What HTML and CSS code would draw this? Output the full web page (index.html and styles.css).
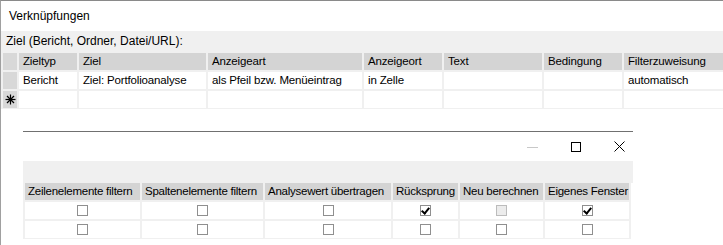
FILE: index.html
```html
<!DOCTYPE html>
<html lang="de">
<head>
    <meta charset="UTF-8">
    <title>Verknüpfungen</title>
    <link rel="stylesheet" href="styles.css">
</head>
<body>
    <div class="frame">
        <div class="title">Verknüpfungen</div>

        <div class="links">
            <div class="caption">Ziel (Bericht, Ordner, Datei/URL):</div>
            <div class="grid">
                <div class="rowhead"></div>
                <div class="head">Zieltyp</div>
                <div class="head">Ziel</div>
                <div class="head">Anzeigeart</div>
                <div class="head">Anzeigeort</div>
                <div class="head">Text</div>
                <div class="head">Bedingung</div>
                <div class="head">Filterzuweisung</div>

                <div class="rowhead"></div>
                <div class="cell">Bericht</div>
                <div class="cell">Ziel: Portfolioanalyse</div>
                <div class="cell">als Pfeil bzw. Menüeintrag</div>
                <div class="cell">in Zelle</div>
                <div class="cell"></div>
                <div class="cell"></div>
                <div class="cell">automatisch</div>

                <div class="rowhead">
                    <svg width="11" height="11" viewBox="0 0 11 11">
                        <g stroke="#000" stroke-width="1.2">
                            <line x1="5.5" y1="0.5" x2="5.5" y2="10.5"/>
                            <line x1="0.5" y1="5.5" x2="10.5" y2="5.5"/>
                            <line x1="2" y1="2" x2="9" y2="9"/>
                            <line x1="9" y1="2" x2="2" y2="9"/>
                        </g>
                    </svg>
                </div>
                <div class="cell"></div>
                <div class="cell"></div>
                <div class="cell"></div>
                <div class="cell"></div>
                <div class="cell"></div>
                <div class="cell"></div>
                <div class="cell"></div>
            </div>
        </div>

        <div class="dialog">
            <div class="titlebar">
                <span class="ctl-min"></span>
                <span class="ctl-max"></span>
                <span class="ctl-close">
                    <svg width="11" height="11" viewBox="0 0 11 11">
                        <g stroke="#000" stroke-width="1">
                            <line x1="0.5" y1="0.5" x2="10.5" y2="10.5"/>
                            <line x1="10.5" y1="0.5" x2="0.5" y2="10.5"/>
                        </g>
                    </svg>
                </span>
            </div>
            <div class="band"></div>
            <div class="options">
                <div class="head">Zeilenelemente filtern</div>
                <div class="head">Spaltenelemente filtern</div>
                <div class="head">Analysewert übertragen</div>
                <div class="head">Rücksprung</div>
                <div class="head">Neu berechnen</div>
                <div class="head">Eigenes Fenster</div>

                <div class="cell center"><span class="cb"></span></div>
                <div class="cell center"><span class="cb"></span></div>
                <div class="cell center"><span class="cb"></span></div>
                <div class="cell center"><span class="cb checked"></span></div>
                <div class="cell center"><span class="cb disabled"></span></div>
                <div class="cell center"><span class="cb checked"></span></div>

                <div class="cell center"><span class="cb"></span></div>
                <div class="cell center"><span class="cb"></span></div>
                <div class="cell center"><span class="cb"></span></div>
                <div class="cell center"><span class="cb"></span></div>
                <div class="cell center"><span class="cb"></span></div>
                <div class="cell center"><span class="cb"></span></div>
            </div>
        </div>
    </div>
</body>
</html>
```

FILE: styles.css
```css
body {
    margin: 0;
    font-family: 'Liberation Sans', Arial, sans-serif;
    font-size: 12px;
    color: #000;
    background: #fff;
}

.frame {
    height: 244px;
    border-left: 1px solid #a0a0a0;
    border-top: 1px solid #8a8a8a;
    overflow: hidden;
}

.title {
    height: 30px;
    line-height: 30px;
    padding-left: 8px;
}

.links {
    background: #f0f0f0;
    padding-bottom: 1px;
}

.caption {
    height: 22px;
    line-height: 20px;
    padding-left: 5px;
}

.grid {
    display: grid;
    grid-template-columns: 14px 58px 127px 154px 78px 98px 78px 1fr;
    grid-auto-rows: 17px;
    gap: 2px;
    padding-left: 2px;
    font-size: 11.5px;
    letter-spacing: -0.15px;
}

.rowhead {
    background: #d8d8d8;
    display: flex;
    align-items: center;
    justify-content: center;
}

.head {
    background: #d4d4d4;
    padding-left: 4px;
    line-height: 17px;
    white-space: nowrap;
    overflow: hidden;
}

.cell {
    background: #fff;
    padding-left: 4px;
    line-height: 17px;
    white-space: nowrap;
}

.cell.center {
    padding-left: 0;
    display: flex;
    align-items: center;
    justify-content: center;
}

.dialog {
    margin-top: 22px;
    margin-left: 22px;
    width: 610px;
    border-top: 1px solid #707070;
}

.titlebar {
    height: 29px;
    display: flex;
    align-items: center;
    justify-content: flex-end;
    gap: 33px;
    padding-right: 8px;
}

.ctl-min {
    width: 11px;
    height: 1px;
    background: #c8c8c8;
    margin-top: 2px;
}

.ctl-max {
    width: 8px;
    height: 8px;
    border: 1px solid #000;
    margin-top: 1px;
}

.ctl-close {
    width: 11px;
    height: 11px;
    display: flex;
}

.band {
    height: 22px;
    background: #f0f0f0;
}

.options {
    display: inline-grid;
    grid-template-columns: 115px 121px 126px 65px 83px 84px;
    grid-auto-rows: 17px;
    gap: 2px;
    padding: 0 2px 1px 2px;
    background: #f0f0f0;
    font-size: 11.5px;
    letter-spacing: -0.25px;
    vertical-align: top;
}

.options .head {
    padding-left: 3px;
}

.cb {
    width: 9px;
    height: 9px;
    border: 1px solid #8f8f8f;
    background: #fff;
    position: relative;
}

.cb.disabled {
    background: #ececec;
    border-color: #bcbcbc;
}

.cb.checked::after {
    content: "";
    position: absolute;
    left: 2px;
    top: 0px;
    width: 3px;
    height: 6px;
    border: solid #000;
    border-width: 0 2px 2px 0;
    transform: rotate(40deg);
}
```
